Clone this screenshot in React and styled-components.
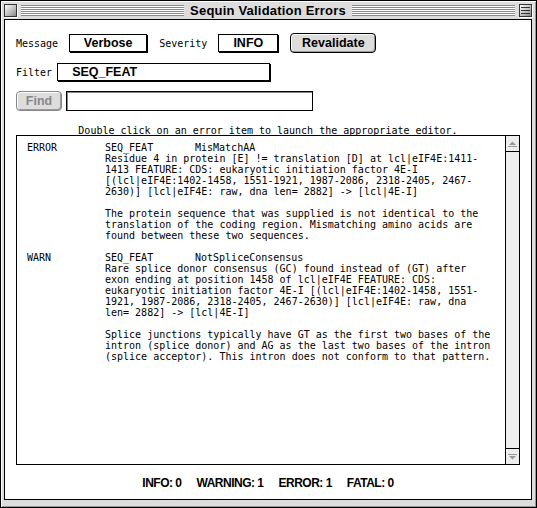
import React from 'react';
import styled, { createGlobalStyle } from 'styled-components';

const mono = `"DejaVu Sans Mono", "Liberation Mono", monospace`;
const sans = `"Liberation Sans", Arial, sans-serif`;

const GlobalStyle = createGlobalStyle`
  body {
    margin: 0;
    background: #fff;
  }
`;

const Window = styled.div`
  width: 537px;
  height: 508px;
  box-sizing: border-box;
  border: 1px solid #000;
  background: #dddddd;
  box-shadow: inset 1px 1px 0 #fff, inset -1px -1px 0 #999;
  padding: 0 4px 7px 3px;
  display: flex;
  flex-direction: column;
`;

const TitleBar = styled.div`
  height: 18px;
  display: flex;
  align-items: center;
  gap: 4px;
`;

const WinBox = styled.div`
  position: relative;
  width: 11px;
  height: 11px;
  flex: none;
  border: 1px solid #333;
  background: linear-gradient(135deg, #fff 0%, #bbb 60%, #888 100%);
  box-shadow: 1px 1px 0 #fff;
  margin-top: 1px;
`;

const CollapseLines = styled.div`
  position: absolute;
  left: 1px;
  right: 1px;
  top: 2px;
  height: 7px;
  border-top: 1px solid #333;
  border-bottom: 1px solid #333;
  box-sizing: border-box;
  &::after {
    content: '';
    position: absolute;
    left: 0;
    right: 0;
    top: 2px;
    border-top: 1px solid #333;
  }
`;

const Stripes = styled.div`
  flex: 1;
  height: 11px;
  margin-top: 1px;
  background: repeating-linear-gradient(to bottom, #888 0 1px, #fff 1px 2px);
`;

const Title = styled.div`
  font-family: ${sans};
  font-weight: bold;
  font-size: 13px;
  color: #000;
  padding: 0 2px;
  white-space: nowrap;
  letter-spacing: 0.2px;
`;

const Content = styled.div`
  flex: 1;
  border: 1px solid #000;
  background: #fff;
  padding: 13px 11px 0 11px;
  display: flex;
  flex-direction: column;
  min-height: 0;
`;

const Row = styled.div`
  display: flex;
  align-items: center;
  gap: ${p => p.$gap || 11}px;
  margin-bottom: ${p => p.$after || 0}px;
  height: 20px;
`;

const Label = styled.span`
  font-family: ${mono};
  font-size: 10px;
  color: #000;
`;

const Popup = styled.div`
  width: ${p => p.$w}px;
  height: 18px;
  box-sizing: border-box;
  border: 1px solid #000;
  box-shadow: 1px 1px 0 #000;
  margin-right: 1px;
  display: flex;
  align-items: center;
  justify-content: ${p => (p.$left ? 'flex-start' : 'center')};
  padding-left: ${p => (p.$left ? 14 : 0)}px;
  font-family: ${sans};
  font-weight: bold;
  font-size: 12.5px;
  color: #000;
`;

const Button = styled.button`
  width: ${p => p.$w}px;
  height: 20px;
  box-sizing: border-box;
  border: 1px solid ${p => (p.disabled ? '#888' : '#000')};
  border-radius: 4px;
  background: #dddddd;
  box-shadow: inset 1px 1px 0 #fff, inset -1px -1px 0 #999;
  padding: 0;
  font-family: ${sans};
  font-weight: bold;
  font-size: 12.5px;
  color: ${p => (p.disabled ? '#888' : '#000')};
`;

const TextField = styled.div`
  width: ${p => p.$w}px;
  height: 20px;
  box-sizing: border-box;
  border: 1px solid #000;
  box-shadow: inset 1px 1px 0 #888;
`;

const Hint = styled.div`
  font-family: ${mono};
  font-size: 10px;
  height: 12px;
  line-height: 16px;
  text-align: center;
  margin-top: 12px;
  color: #000;
`;

const ListBox = styled.div`
  height: 330px;
  box-sizing: border-box;
  border: 1px solid #000;
  display: flex;
`;

const ListBody = styled.div`
  flex: 1;
  padding: 6px 0 0 10px;
  font-family: ${mono};
  font-size: 10px;
  line-height: 11px;
  color: #000;
`;

const Item = styled.div`
  display: grid;
  grid-template-columns: 78px 1fr;
  margin-bottom: 11px;
`;

const Head = styled.div`
  display: grid;
  grid-template-columns: 90px 1fr;
`;

const Text = styled.div`
  white-space: pre;
  margin-top: ${p => p.$mt || 0}px;
`;

const ScrollBar = styled.div`
  width: 14px;
  flex: none;
  box-sizing: border-box;
  border-left: 1px solid #000;
  background: #eeeeee;
  display: flex;
  flex-direction: column;
  justify-content: space-between;
`;

const Arrow = styled.div`
  height: 15px;
  display: flex;
  align-items: center;
  justify-content: center;
  background: #eeeeee;
  border-${p => (p.$down ? 'top' : 'bottom')}: 1px solid #000;
`;

const Status = styled.div`
  flex: 1;
  display: flex;
  align-items: center;
  justify-content: center;
  gap: 15px;
  font-family: ${sans};
  font-weight: bold;
  font-size: 12px;
  letter-spacing: -0.5px;
  color: #000;
  padding-top: 1px;
`;

const ArrowIcon = ({ down }) => (
  <svg width="9" height="6" viewBox="0 0 9 6">
    {down ? (
      <>
        <rect x="0" y="0" width="9" height="1" fill="#999" />
        <polygon points="1,2 8,2 4.5,5.5" fill="#999" />
      </>
    ) : (
      <>
        <polygon points="4.5,0.5 8,4 1,4" fill="#999" />
        <rect x="0" y="5" width="9" height="1" fill="#999" />
      </>
    )}
  </svg>
);

const items = [
  {
    sev: 'ERROR',
    code: 'SEQ_FEAT',
    name: 'MisMatchAA',
    msg: [
      'Residue 4 in protein [E] != translation [D] at lcl|eIF4E:1411-',
      '1413 FEATURE: CDS: eukaryotic initiation factor 4E-I',
      '[(lcl|eIF4E:1402-1458, 1551-1921, 1987-2086, 2318-2405, 2467-',
      '2630)] [lcl|eIF4E: raw, dna len= 2882] -> [lcl|4E-I]',
    ],
    expl: [
      'The protein sequence that was supplied is not identical to the',
      'translation of the coding region. Mismatching amino acids are',
      'found between these two sequences.',
    ],
  },
  {
    sev: 'WARN',
    code: 'SEQ_FEAT',
    name: 'NotSpliceConsensus',
    msg: [
      'Rare splice donor consensus (GC) found instead of (GT) after',
      'exon ending at position 1458 of lcl|eIF4E FEATURE: CDS:',
      'eukaryotic initiation factor 4E-I [(lcl|eIF4E:1402-1458, 1551-',
      '1921, 1987-2086, 2318-2405, 2467-2630)] [lcl|eIF4E: raw, dna',
      'len= 2882] -> [lcl|4E-I]',
    ],
    expl: [
      'Splice junctions typically have GT as the first two bases of the',
      'intron (splice donor) and AG as the last two bases of the intron',
      '(splice acceptor). This intron does not conform to that pattern.',
    ],
  },
];

export default function App() {
  return (
    <>
      <GlobalStyle />
      <Window>
        <TitleBar>
          <WinBox />
          <Stripes />
          <Title>Sequin Validation Errors</Title>
          <Stripes />
          <WinBox>
            <CollapseLines />
          </WinBox>
        </TitleBar>
        <Content>
          <Row $after={9}>
            <Label>Message</Label>
            <Popup $w={78}>Verbose</Popup>
            <Label>Severity</Label>
            <Popup $w={60}>INFO</Popup>
            <Button $w={86}>Revalidate</Button>
          </Row>
          <Row $gap={5} $after={9}>
            <Label>Filter</Label>
            <Popup $w={213} $left>SEQ_FEAT</Popup>
          </Row>
          <Row $gap={4}>
            <Button $w={46} disabled>Find</Button>
            <TextField $w={247} />
          </Row>
          <Hint>Double click on an error item to launch the appropriate editor.</Hint>
          <ListBox>
            <ListBody>
              {items.map(it => (
                <Item key={it.name}>
                  <div>{it.sev}</div>
                  <div>
                    <Head>
                      <span>{it.code}</span>
                      <span>{it.name}</span>
                    </Head>
                    <Text>{it.msg.join('\n')}</Text>
                    <Text $mt={11}>{it.expl.join('\n')}</Text>
                  </div>
                </Item>
              ))}
            </ListBody>
            <ScrollBar>
              <Arrow>
                <ArrowIcon />
              </Arrow>
              <Arrow $down>
                <ArrowIcon down />
              </Arrow>
            </ScrollBar>
          </ListBox>
          <Status>
            <span>INFO: 0</span>
            <span>WARNING: 1</span>
            <span>ERROR: 1</span>
            <span>FATAL: 0</span>
          </Status>
        </Content>
      </Window>
    </>
  );
}
